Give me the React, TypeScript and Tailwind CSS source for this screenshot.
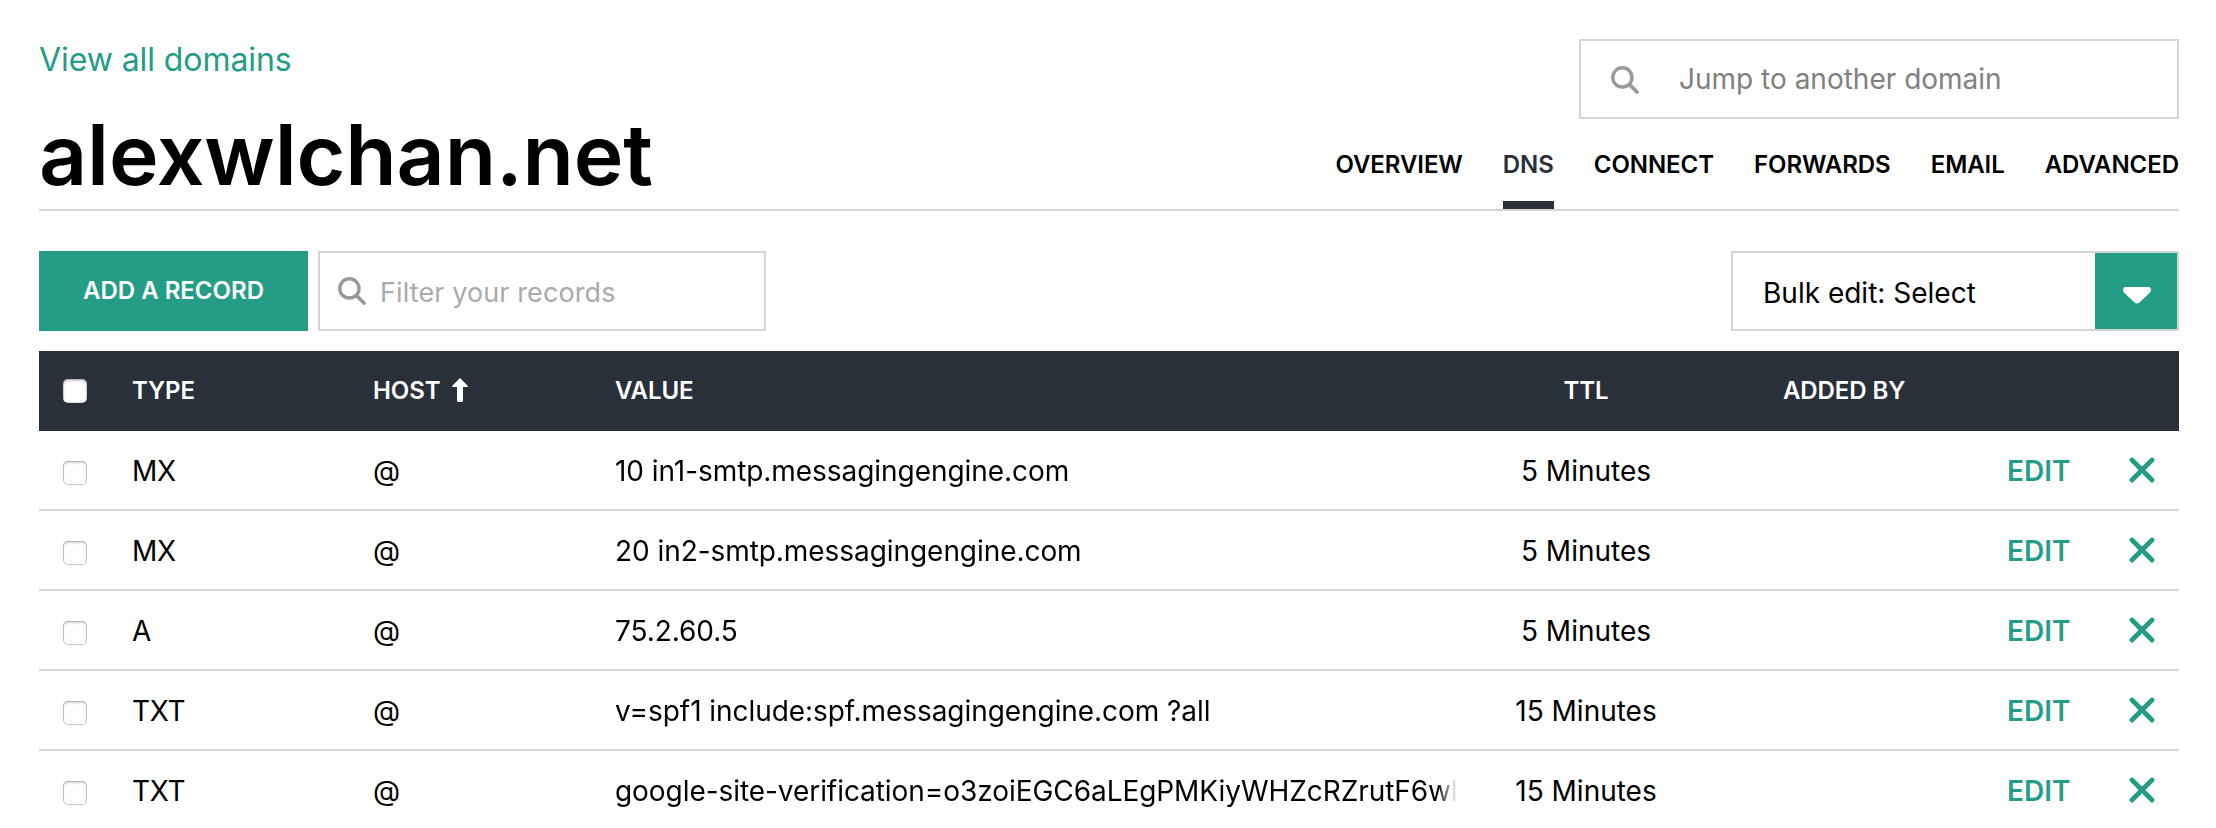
import { useState } from "react";

type RecordRow = { type: string; host: string; value: string; ttl: string };

const records: RecordRow[] = [
  { type: "MX", host: "@", value: "10 in1-smtp.messagingengine.com", ttl: "5 Minutes" },
  { type: "MX", host: "@", value: "20 in2-smtp.messagingengine.com", ttl: "5 Minutes" },
  { type: "A", host: "@", value: "75.2.60.5", ttl: "5 Minutes" },
  { type: "TXT", host: "@", value: "v=spf1 include:spf.messagingengine.com ?all", ttl: "15 Minutes" },
  { type: "TXT", host: "@", value: "google-site-verification=o3zoiEGC6aLEgPMKiyWHZcRZrutF6wl", ttl: "15 Minutes" },
];

const tabs = ["OVERVIEW", "DNS", "CONNECT", "FORWARDS", "EMAIL", "ADVANCED"];

const columns = "grid grid-cols-[93px_241px_242px_855px_313px_224px_1fr]";

function SearchIcon({ className }: { className: string }) {
  return (
    <svg viewBox="0 0 28 28" fill="none" stroke="#999999" strokeLinecap="round" className={className}>
      <circle cx="11.4" cy="11.4" r="9.6" strokeWidth="3.4" />
      <path d="M18.6 18.6 26 26" strokeWidth="3.8" />
    </svg>
  );
}

function Checkbox({ header = false }: { header?: boolean }) {
  const [on, setOn] = useState(false);
  return (
    <button
      role="checkbox"
      aria-checked={on}
      onClick={() => setOn(!on)}
      className={
        header
          ? "block size-6 rounded-[5px] bg-white shadow-[inset_0_2px_3px_rgba(0,0,0,0.22),inset_0_0_0_1px_rgba(0,0,0,0.12)]"
          : "block size-6 rounded-[5px] bg-white shadow-[inset_0_2px_3px_rgba(0,0,0,0.16),inset_0_0_0_1px_rgba(0,0,0,0.2)]"
      }
    />
  );
}

function Row({ record }: { record: RecordRow }) {
  return (
    <div className={`${columns} h-20 items-center border-b-2 border-[#d5d5d5] pt-0.5 text-[28px] leading-[34px]`}>
      <div className="pt-1 pl-6">
        <Checkbox />
      </div>
      <div className="tracking-[-0.3px]">{record.type}</div>
      <div>{record.host}</div>
      <div className="w-[842px] overflow-hidden whitespace-nowrap tracking-[-0.06px] [mask-image:linear-gradient(to_right,#000_calc(100%-20px),transparent)]">
        {record.value}
      </div>
      <div className="w-[232px] text-center">{record.ttl}</div>
      <div />
      <div className="flex items-center justify-between pr-6">
        <span className="font-semibold text-[#239d85]">EDIT</span>
        <svg viewBox="0 0 26 26" className="mb-0.5 size-[26px]" fill="none" stroke="#239d85" strokeWidth="4.8" strokeLinecap="round">
          <path d="M3 3 23 23M23 3 3 23" />
        </svg>
      </div>
    </div>
  );
}

export default function App() {
  return (
    <div className="h-[828px] w-[2216px] overflow-hidden bg-white pl-[39px] pt-[39px] font-['Inter',sans-serif] text-black antialiased">
      <div className="w-[2140px]">
        <header className="flex h-[172px] justify-between border-b-2 border-[#d5d5d5]">
          <div>
            <a className="mt-px block text-[32px] leading-10 tracking-[-0.08px] text-[#239d85]">View all domains</a>
            <h1 className="mt-[27px] text-[84px] leading-[96px] font-semibold tracking-[-0.15px]">alexwlchan.net</h1>
          </div>
          <div className="flex flex-col items-end justify-between">
            <div className="flex h-20 w-[600px] items-center border-2 border-[#d5d5d5] pl-[30px]">
              <SearchIcon className="mt-0.5 size-7" />
              <span className="ml-10 text-[28px] text-[#808080]">Jump to another domain</span>
            </div>
            <nav className="flex gap-10 text-[24px] leading-[32px] font-semibold tracking-[-0.06px]">
              {tabs.map((tab) => (
                <a
                  key={tab}
                  className={
                    tab === "DNS"
                      ? "h-[60px] border-b-8 border-[#29303a] text-[#29303a]"
                      : "h-[60px]"
                  }
                >
                  {tab}
                </a>
              ))}
            </nav>
          </div>
        </header>

        <div className="mt-10 flex h-20">
          <button className="w-[269px] bg-[#239d85] text-[24px] font-semibold text-white">ADD A RECORD</button>
          <div className="ml-[10px] flex w-[448px] items-center border-2 border-[#d5d5d5] pl-[18px]">
            <SearchIcon className="size-7" />
            <span className="ml-[14px] pt-1 text-[27px] tracking-[0.1px] text-[#aaaaaa]">Filter your records</span>
          </div>
          <div className="ml-auto flex w-[448px] border-2 border-[#d5d5d5]">
            <span className="flex flex-1 items-center pt-1 pl-[30px] text-[28px]">Bulk edit: Select</span>
            <span className="flex w-[82px] items-center justify-center bg-[#239d85] pt-2 pl-0.5">
              <svg viewBox="0 0 28 17" className="h-[17px] w-7" fill="#fff">
                <path d="M3 0H25Q28 0 28 3Q28 4.500 26.800 5.800L16.500 15.500Q14 17.500 11.500 15.500L1.200 5.800Q0 4.500 0 3Q0 0 3 0Z" />
              </svg>
            </span>
          </div>
        </div>

        <main className="mt-5">
          <div className={`${columns} h-20 items-center bg-[#29303a] text-[24px] leading-[30px] font-semibold tracking-[-0.1px] text-white`}>
            <div className="pl-6">
              <Checkbox header />
            </div>
            <div>TYPE</div>
            <div className="flex items-center gap-3">
              HOST
              <svg viewBox="0 0 16 24" className="mb-0.5 h-6 w-4" fill="#fff">
                <path d="M8 0 15.500 7.600Q16.200 9 14.800 9H11V22.500Q11 24 9.500 24H6.500Q5 24 5 22.500V9H1.200Q-.2 9 .5 7.600Z" />
              </svg>
            </div>
            <div>VALUE</div>
            <div className="w-[232px] text-center">TTL</div>
            <div>ADDED BY</div>
          </div>
          {records.map((record, i) => (
            <Row key={i} record={record} />
          ))}
        </main>
      </div>
    </div>
  );
}
